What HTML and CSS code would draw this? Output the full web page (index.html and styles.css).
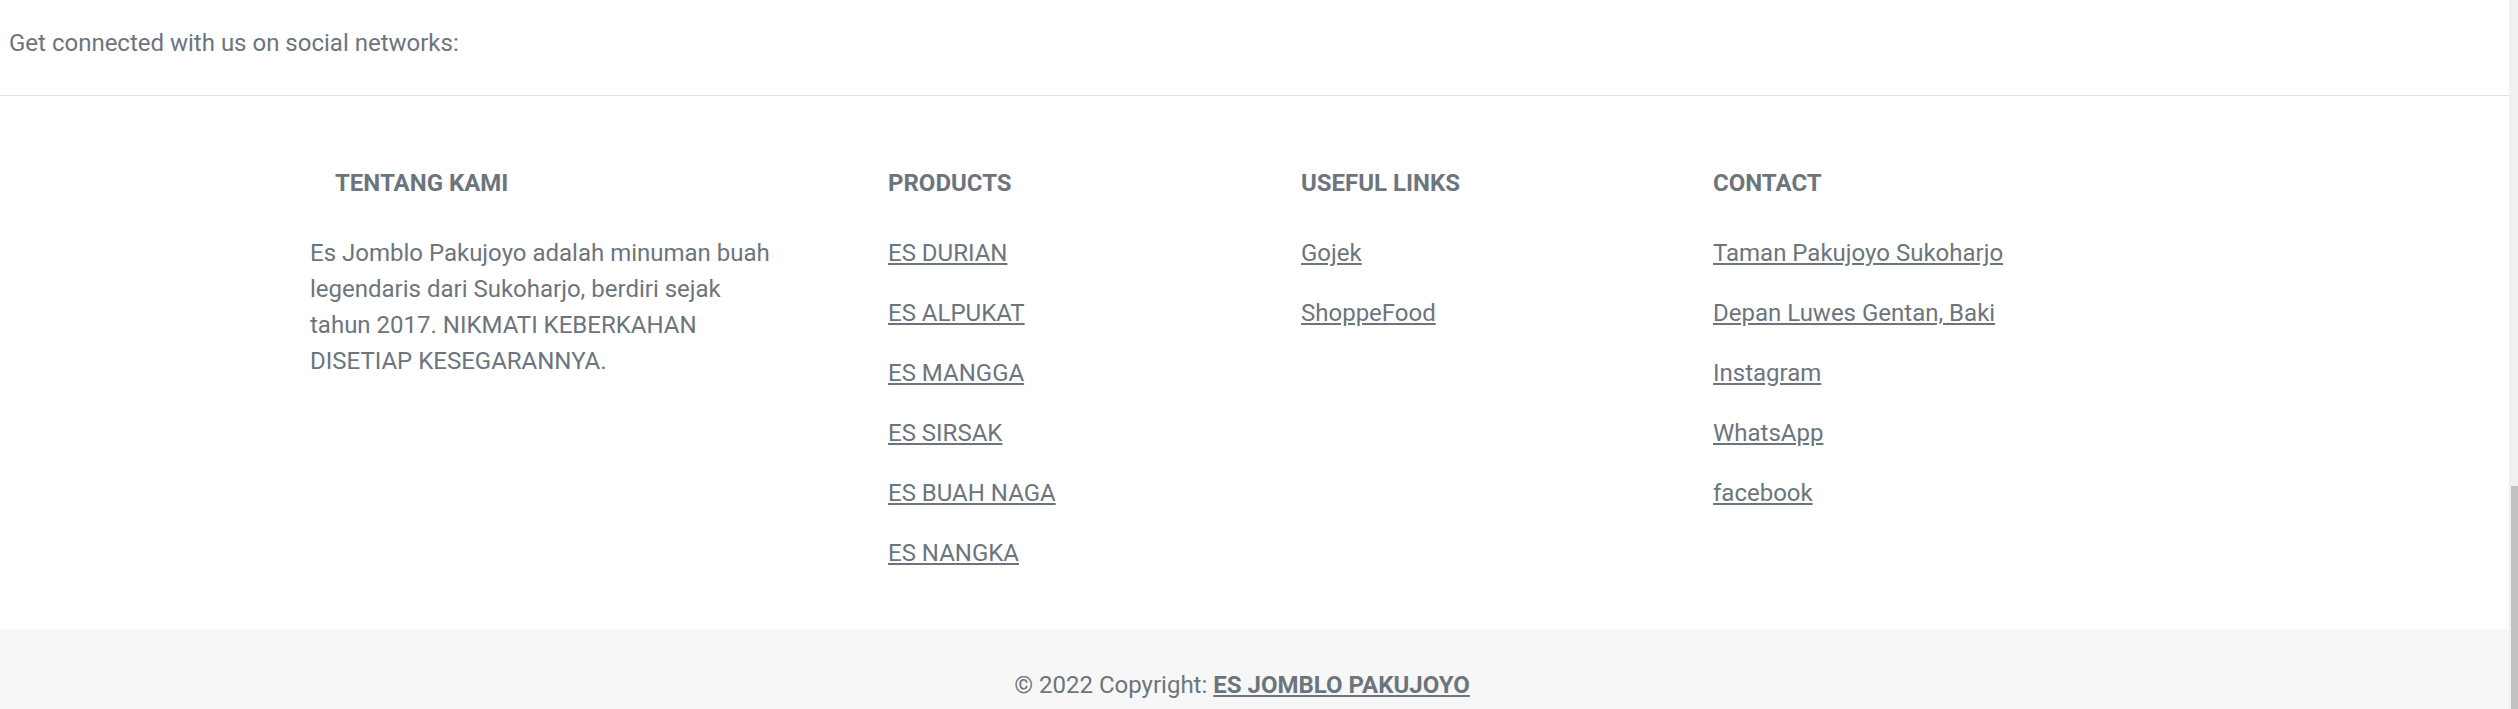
FILE: index.html
```html
<!DOCTYPE html>
<html lang="id">
<head>
<meta charset="utf-8">
<title>Es Jomblo Pakujoyo</title>
<link rel="stylesheet" href="styles.css">
</head>
<body>
<div class="page">
  <main class="site">
    <section class="social-bar">
      <span class="social-text">Get connected with us on social networks:</span>
    </section>
    <section class="footer-main">
      <div class="footer-grid">
        <div class="col col-about">
          <h6 class="heading heading-indent">TENTANG KAMI</h6>
          <p>Es Jomblo Pakujoyo adalah minuman buah legendaris dari Sukoharjo, berdiri sejak tahun 2017. NIKMATI KEBERKAHAN DISETIAP KESEGARANNYA.</p>
        </div>
        <div class="col">
          <h6 class="heading">PRODUCTS</h6>
          <p><a href="#">ES DURIAN</a></p>
          <p><a href="#">ES ALPUKAT</a></p>
          <p><a href="#">ES MANGGA</a></p>
          <p><a href="#">ES SIRSAK</a></p>
          <p><a href="#">ES BUAH NAGA</a></p>
          <p><a href="#">ES NANGKA</a></p>
        </div>
        <div class="col">
          <h6 class="heading">USEFUL LINKS</h6>
          <p><a href="#">Gojek</a></p>
          <p><a href="#">ShoppeFood</a></p>
        </div>
        <div class="col">
          <h6 class="heading">CONTACT</h6>
          <p><a href="#">Taman Pakujoyo Sukoharjo</a></p>
          <p><a href="#">Depan Luwes Gentan, Baki</a></p>
          <p><a href="#">Instagram</a></p>
          <p><a href="#">WhatsApp</a></p>
          <p><a href="#">facebook</a></p>
        </div>
      </div>
    </section>
    <div class="copyright">© 2022 Copyright: <a class="brand" href="#">ES JOMBLO PAKUJOYO</a></div>
  </main>
  <div class="scrollbar"><div class="thumb"></div></div>
</div>
</body>
</html>
```

FILE: styles.css
```css
html, body {
  margin: 0;
  padding: 0;
  height: 709px;
  overflow: hidden;
  background: #ffffff;
}

body {
  font-family: Roboto, "Liberation Sans", sans-serif;
  font-size: 24px;
  line-height: 36px;
  color: #6c757d;
}

.page {
  display: flex;
  height: 709px;
  overflow: hidden;
}

.site {
  flex: 1;
  min-width: 0;
  overflow: hidden;
}

.social-bar {
  display: flex;
  padding: 25px 9px 34px;
  border-bottom: 1px solid #dee2e6;
}

.footer-main {
  padding-top: 73px;
}

.footer-grid {
  display: grid;
  grid-template-columns: 578px 413px 412px 459px;
  padding-left: 310px;
}

.col {
  margin-bottom: 33.5px;
}

.col-about p {
  max-width: 470px;
}

.heading {
  margin: 0 0 37.5px;
  font-size: 24px;
  font-weight: 700;
  line-height: 28.8px;
  text-transform: uppercase;
}

.heading-indent {
  padding-left: 25px;
}

p {
  margin: 0 0 24px;
}

a {
  color: inherit;
  text-decoration: underline;
}

.copyright {
  background: #f7f7f7;
  text-align: center;
  padding: 38.5px 25px 34.5px 0;
}

.brand {
  font-weight: 700;
}

.scrollbar {
  width: 9px;
  box-sizing: border-box;
  background: #f0f0f0;
  padding: 486px 0 0 2px;
  display: flex;
  flex-direction: column;
}

.thumb {
  flex: 1;
  background: #c1c1c1;
}
```
